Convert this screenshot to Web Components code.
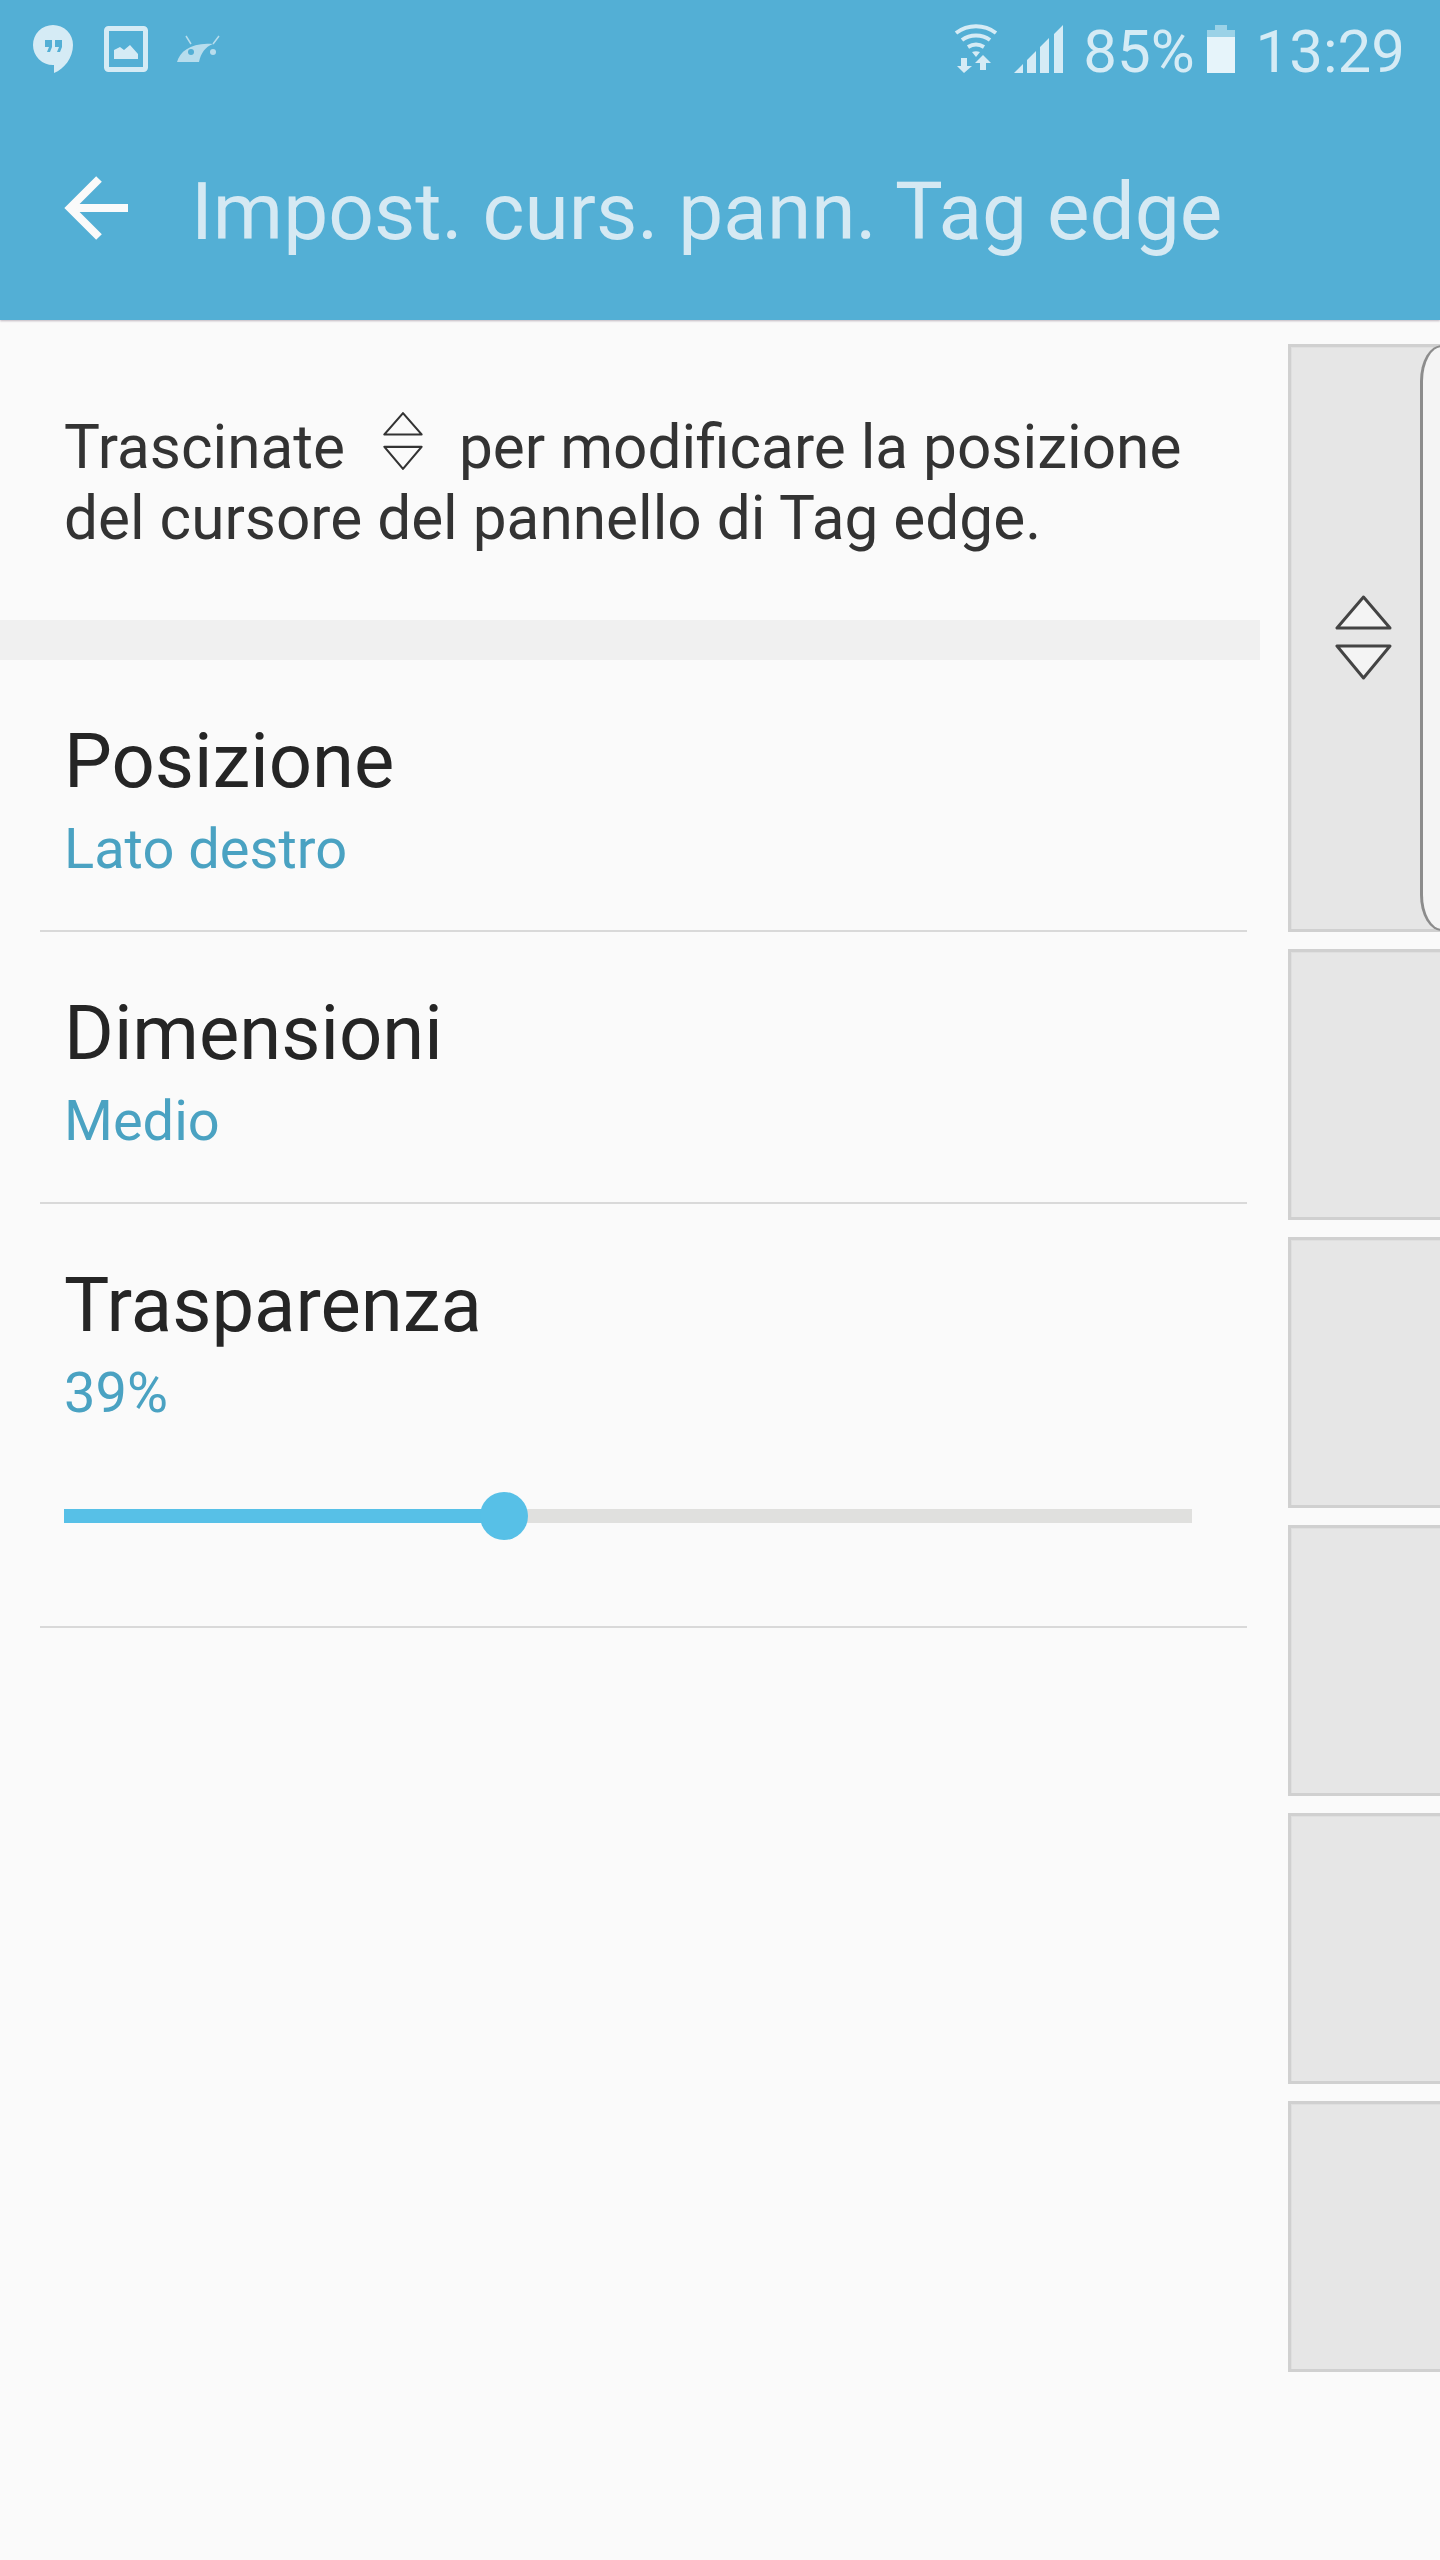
<!DOCTYPE html>
<html lang="it">
<head>
<meta charset="utf-8">
<title>Impost. curs. pann. Tag edge</title>
<style>
  html, body { margin: 0; background: #fafafa; }
  body { font-family: Roboto, "Liberation Sans", sans-serif; }
</style>
</head>
<body>
<tag-edge-settings></tag-edge-settings>

<script>
const ARROWS = `
  <path d="M28.5 3 2 34H55Z"/>
  <path d="M2 52H55L28.5 84Z"/>`;

class StatusBar extends HTMLElement {
  constructor() {
    super();
    this.attachShadow({ mode: 'open' }).innerHTML = `
      <style>
        :host { display: flex; height: 96px; padding: 0 35px 0 33px; align-items: center; color: #d5ebf5; }
        svg { display: block; height: 96px; flex: none; fill: currentColor; }
        .left { display: flex; gap: 24px; }
        .right { display: flex; margin-left: auto; align-items: center; }
        span { font-size: 60px; line-height: 96px; padding-top: 4px; height: 96px; box-sizing: border-box; white-space: nowrap; }
      </style>
      <div class="left">
        <svg width="40" viewBox="33 0 40 96">
          <path d="M53 25a20 20 0 0 0 0 40h1v8c10-4 19-15 19-28a20 20 0 0 0-20-20Z"/>
          <path fill="#53afd5" d="M45 40h7v7l-2 5h-3l2-5h-4ZM55 40h7v7l-2 5h-3l2-5h-4Z"/>
        </svg>
        <svg width="44" viewBox="104 0 44 96" style="margin-left:7px">
          <rect x="106.500" y="28.500" width="39" height="41" rx="2" fill="none" stroke="currentColor" stroke-width="5"/>
          <path d="M114 59v-9l6-3 4 3 6-5 8 9v5Z"/>
        </svg>
        <svg width="43" viewBox="177 0 43 96" style="color:#b7dded;margin-left:5px">
          <path d="M177 62c3-11 15-20 36-18-8 3-12 9-14 18Z"/>
          <circle cx="191" cy="52" r="3" fill="#53afd5"/>
          <circle cx="213" cy="52" r="3"/>
          <path d="M186 36l5 8M219 36l-6 8" stroke="currentColor" stroke-width="1.500" fill="none"/>
        </svg>
      </div>
      <div class="right">
        <svg width="44" viewBox="955 0 44 96">
          <g fill="none" stroke="currentColor" stroke-width="4">
            <path d="M957 33c12-9 28-9 40 0"/>
            <path d="M963 40c8-6 20-6 28 0"/>
            <path d="M969 47c5-3 11-3 16 0"/>
          </g>
          <path d="M973 52c3-1 5-1 8 0l-4 5ZM962 58h6v8h5l-8 7-7-7h4ZM984 55l8 8h-5v7h-6v-7h-5Z"/>
        </svg>
        <svg width="49" viewBox="1014 0 49 96" style="margin-left:16px">
          <path d="M1014 73l9-9v9ZM1027 73V60l9-9v22ZM1040 73V47l9-9v35ZM1054 73V34l9-9v48Z"/>
        </svg>
        <span style="margin-left:20px">85%</span>
        <svg width="28" viewBox="1207 0 28 96" style="margin-left:12px">
          <path d="M1215 25h12v5h8v7h-28v-7h8Z" fill="#9bd2e7"/>
          <rect x="1207" y="37" width="28" height="36" fill="#e6f4fa"/>
        </svg>
        <span style="margin-left:21px">13:29</span>
      </div>`;
  }
}

class AppHeader extends HTMLElement {
  constructor() {
    super();
    this.attachShadow({ mode: 'open' }).innerHTML = `
      <style>
        :host { display: block; height: 320px; background: #53afd5; box-shadow: 0 1px 2px rgba(120, 100, 120, .45); position: relative; }
        .bar { display: flex; height: 224px; padding-left: 64px; align-items: center; gap: 63px; }
        svg { display: block; flex: none; }
        h1 { margin: 0; padding-top: 8px; font-size: 80.2px; line-height: 90px; font-weight: 400; color: #d5e9f3; white-space: nowrap; }
      </style>
      <status-bar></status-bar>
      <div class="bar">
        <svg width="64" height="64" viewBox="0 0 64 64" fill="none" stroke="#fafafa" stroke-width="8">
          <path d="M64 32H5"/>
          <path d="M35 3 6 32l29 29"/>
        </svg>
        <h1><slot></slot></h1>
      </div>`;
  }
}

class ArrowsIcon extends HTMLElement {
  constructor() {
    super();
    this.attachShadow({ mode: 'open' }).innerHTML = `
      <style>
        :host { display: inline-block; width: 40px; height: 40px; margin: 0 36px 0 38px; vertical-align: -3px; }
        svg { display: block; margin-top: -20px; }
      </style>
      <svg width="40" height="60" viewBox="0 0 57 87" preserveAspectRatio="none" fill="none" stroke="#333" stroke-width="3" stroke-linejoin="round">${ARROWS}</svg>`;
  }
}

class SettingRow extends HTMLElement {
  constructor() {
    super();
    this.attachShadow({ mode: 'open' }).innerHTML = `
      <style>
        :host { display: block; margin: 0 13px 0 40px; padding: 56px 0 48px 24px; border-bottom: 2px solid #d9d9d9; }
        .label { font-size: 76px; line-height: 90px; color: #252525; }
        .value { margin-top: 10px; font-size: 56px; line-height: 66px; color: #4aa2c2; }
      </style>
      <div class="label"><slot name="label"></slot></div>
      <div class="value"><slot name="value"></slot></div>
      <slot></slot>`;
  }
}

class ValueSlider extends HTMLElement {
  constructor() {
    super();
    this.attachShadow({ mode: 'open' }).innerHTML = `
      <style>
        :host { display: block; height: 14px; margin: 83px 55px 55px 0; background: #e0e0de; position: relative; }
        .fill { height: 100%; background: #57c0e7; }
        .thumb { position: absolute; top: -17px; width: 48px; height: 48px; margin-left: -24px; border-radius: 50%; background: #57c0e7; }
      </style>
      <div class="fill"></div>
      <div class="thumb"></div>`;
    const value = this.getAttribute('value');
    this.shadowRoot.querySelector('.fill').style.width = value;
    this.shadowRoot.querySelector('.thumb').style.left = value;
  }
}

class DragPanel extends HTMLElement {
  constructor() {
    super();
    this.attachShadow({ mode: 'open' }).innerHTML = `
      <style>
        :host { display: block; box-sizing: border-box; background: #e6e6e6; border: solid #d0d0d0; border-width: 3px 0 3px 3px; box-shadow: inset 1px 1px 0 #dfdfdf; position: relative; flex: none; height: 271px; }
        :host([active]) { height: 588px; }
        .handle { position: absolute; left: 129px; top: -2px; bottom: -2px; right: -2px; box-sizing: border-box; background: #f4f4f4; border: solid #8c8c8c; border-width: 2px 0 2px 3px; border-radius: 22px 0 0 22px / 36px 0 0 36px; }
        .arrows { position: absolute; left: 44px; top: 247px; display: block; }
        :host(:not([active])) .handle, :host(:not([active])) .arrows { display: none; }
      </style>
      <svg class="arrows" width="57" height="87" viewBox="0 0 57 87" fill="#f4f4f4" stroke="#444" stroke-width="3" stroke-linejoin="round">${ARROWS}</svg>
      <div class="handle"></div>`;
  }
}

class TagEdgeSettings extends HTMLElement {
  constructor() {
    super();
    this.attachShadow({ mode: 'open' }).innerHTML = `
      <style>
        :host { display: block; height: 2560px; overflow: hidden; background: #fafafa; }
        main { display: flex; }
        .list { width: 1260px; flex: none; }
        .intro { margin: 0; padding: 92px 40px 66px 64px; font-size: 60.3px; line-height: 71px; color: #333; }
        .band { height: 40px; background: #f0f0f0; }
        .panels { flex: 1; margin-left: 28px; padding-top: 24px; display: flex; flex-direction: column; gap: 17px; min-width: 0; }
      </style>
      <app-header>Impost. curs. pann. Tag edge</app-header>
      <main>
        <div class="list">
          <p class="intro"><span>Trascinate</span><arrows-icon></arrows-icon><span>per modificare la posizione</span><br><span>del cursore del pannello di Tag edge.</span></p>
          <div class="band"></div>
          <setting-row><span slot="label">Posizione</span><span slot="value">Lato destro</span></setting-row>
          <setting-row><span slot="label">Dimensioni</span><span slot="value">Medio</span></setting-row>
          <setting-row>
            <span slot="label">Trasparenza</span><span slot="value">39%</span>
            <value-slider value="39%"></value-slider>
          </setting-row>
        </div>
        <div class="panels">
          <drag-panel active></drag-panel>
          <drag-panel></drag-panel>
          <drag-panel></drag-panel>
          <drag-panel></drag-panel>
          <drag-panel></drag-panel>
          <drag-panel></drag-panel>
        </div>
      </main>`;
  }
}

customElements.define('status-bar', StatusBar);
customElements.define('app-header', AppHeader);
customElements.define('arrows-icon', ArrowsIcon);
customElements.define('setting-row', SettingRow);
customElements.define('value-slider', ValueSlider);
customElements.define('drag-panel', DragPanel);
customElements.define('tag-edge-settings', TagEdgeSettings);
</script>
</body>
</html>
